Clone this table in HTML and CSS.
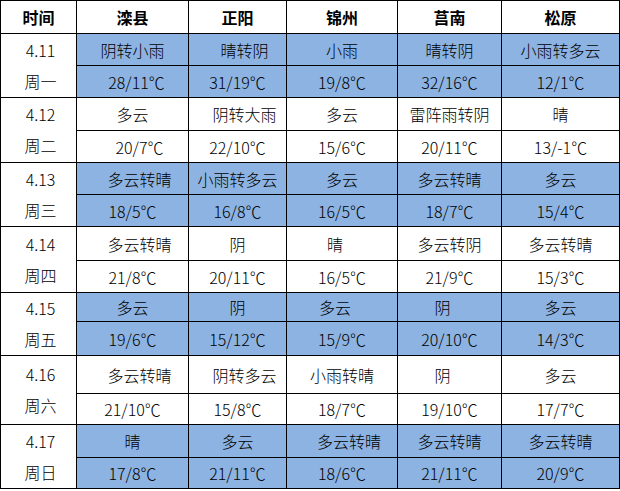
FILE: index.html
```html
<!DOCTYPE html>
<html lang="zh-CN">
<head>
<meta charset="utf-8">
<title>天气预报</title>
<link rel="stylesheet" href="styles.css">
</head>
<body>
<table class="wx">
  <colgroup>
    <col class="c0"><col class="c1"><col class="c2"><col class="c3"><col class="c4"><col class="c5">
  </colgroup>
  <thead>
    <tr class="h33">
      <th>时间</th><th>滦县</th><th>正阳</th><th>锦州</th><th>莒南</th><th>松原</th>
    </tr>
  </thead>
  <tbody>
    <tr class="h32 blue">
      <td class="date" rowspan="2">4.11<br>周一</td>
      <td>阴转小雨</td><td class="r">晴转阴</td><td>小雨</td><td>晴转阴</td><td>小雨转多云</td>
    </tr>
    <tr class="h32 blue">
      <td class="r4">28/11℃</td><td>31/19℃</td><td>19/8℃</td><td>32/16℃</td><td>12/1℃</td>
    </tr>

    <tr class="h33">
      <td class="date" rowspan="2">4.12<br>周二</td>
      <td>多云</td><td class="r">阴转大雨</td><td>多云</td><td>雷阵雨转阴</td><td>晴</td>
    </tr>
    <tr class="h32">
      <td class="r">20/7℃</td><td>22/10℃</td><td>15/6℃</td><td>20/11℃</td><td>13/-1℃</td>
    </tr>

    <tr class="h32 blue">
      <td class="date" rowspan="2">4.13<br>周三</td>
      <td class="r">多云转晴</td><td>小雨转多云</td><td>多云</td><td>多云转晴</td><td>多云</td>
    </tr>
    <tr class="h32 blue">
      <td>18/5℃</td><td>16/8℃</td><td>16/5℃</td><td>18/7℃</td><td>15/4℃</td>
    </tr>

    <tr class="h34">
      <td class="date" rowspan="2">4.14<br>周四</td>
      <td class="r">多云转晴</td><td>阴</td><td class="l">晴</td><td>多云转阴</td><td>多云转晴</td>
    </tr>
    <tr class="h32">
      <td>21/8℃</td><td>20/11℃</td><td>16/5℃</td><td>21/9℃</td><td>15/3℃</td>
    </tr>

    <tr class="h29 blue">
      <td class="date" rowspan="2">4.15<br>周五</td>
      <td>多云</td><td>阴</td><td class="l">多云</td><td class="l">阴</td><td>多云</td>
    </tr>
    <tr class="h34 blue">
      <td>19/6℃</td><td>15/12℃</td><td>15/9℃</td><td>20/10℃</td><td>14/3℃</td>
    </tr>

    <tr class="h38">
      <td class="date" rowspan="2">4.16<br>周六</td>
      <td class="r">多云转晴</td><td class="r">阴转多云</td><td>小雨转晴</td><td class="l">阴</td><td>多云</td>
    </tr>
    <tr class="h31">
      <td>21/10℃</td><td>15/8℃</td><td>18/7℃</td><td>19/10℃</td><td>17/7℃</td>
    </tr>

    <tr class="h33 blue">
      <td class="date" rowspan="2">4.17<br>周日</td>
      <td>晴</td><td>多云</td><td class="r">多云转晴</td><td>多云转晴</td><td>多云转晴</td>
    </tr>
    <tr class="h31 blue">
      <td>17/8℃</td><td>21/11℃</td><td>18/6℃</td><td>21/11℃</td><td>20/9℃</td>
    </tr>
  </tbody>
</table>
</body>
</html>
```

FILE: styles.css
```css
html, body {
  margin: 0;
  padding: 0;
  background: #ffffff;
}

.wx {
  border-collapse: collapse;
  table-layout: fixed;
  width: 619px;
  font-family: "Noto Sans CJK SC", "Noto Sans", sans-serif;
  font-size: 16px;
  font-weight: 300;
  color: #000000;
}

.c0 { width: 76px; }
.c1 { width: 112px; }
.c2 { width: 98px; }
.c3 { width: 111px; }
.c4 { width: 104px; }
.c5 { width: 118px; }

.wx th,
.wx td {
  border: 1px solid #000000;
  padding: 0;
  text-align: center;
  vertical-align: middle;
  line-height: 20px;
  white-space: nowrap;
  overflow: hidden;
}

.wx th {
  font-weight: 700;
  font-size: 16px;
}

.blue td {
  background: #8db3e2;
}

.blue td.date {
  background: #ffffff;
}

.wx td.date {
  line-height: 31px;
  padding-left: 4px;
}

.wx td.r { padding-left: 14px; }
.wx td.r4 { padding-left: 8px; }
.wx td.l { padding-right: 14px; }

.h29 { height: 29px; }
.h31 { height: 31px; }
.h32 { height: 32px; }
.h33 { height: 33px; }
.h34 { height: 34px; }
.h38 { height: 38px; }
```
